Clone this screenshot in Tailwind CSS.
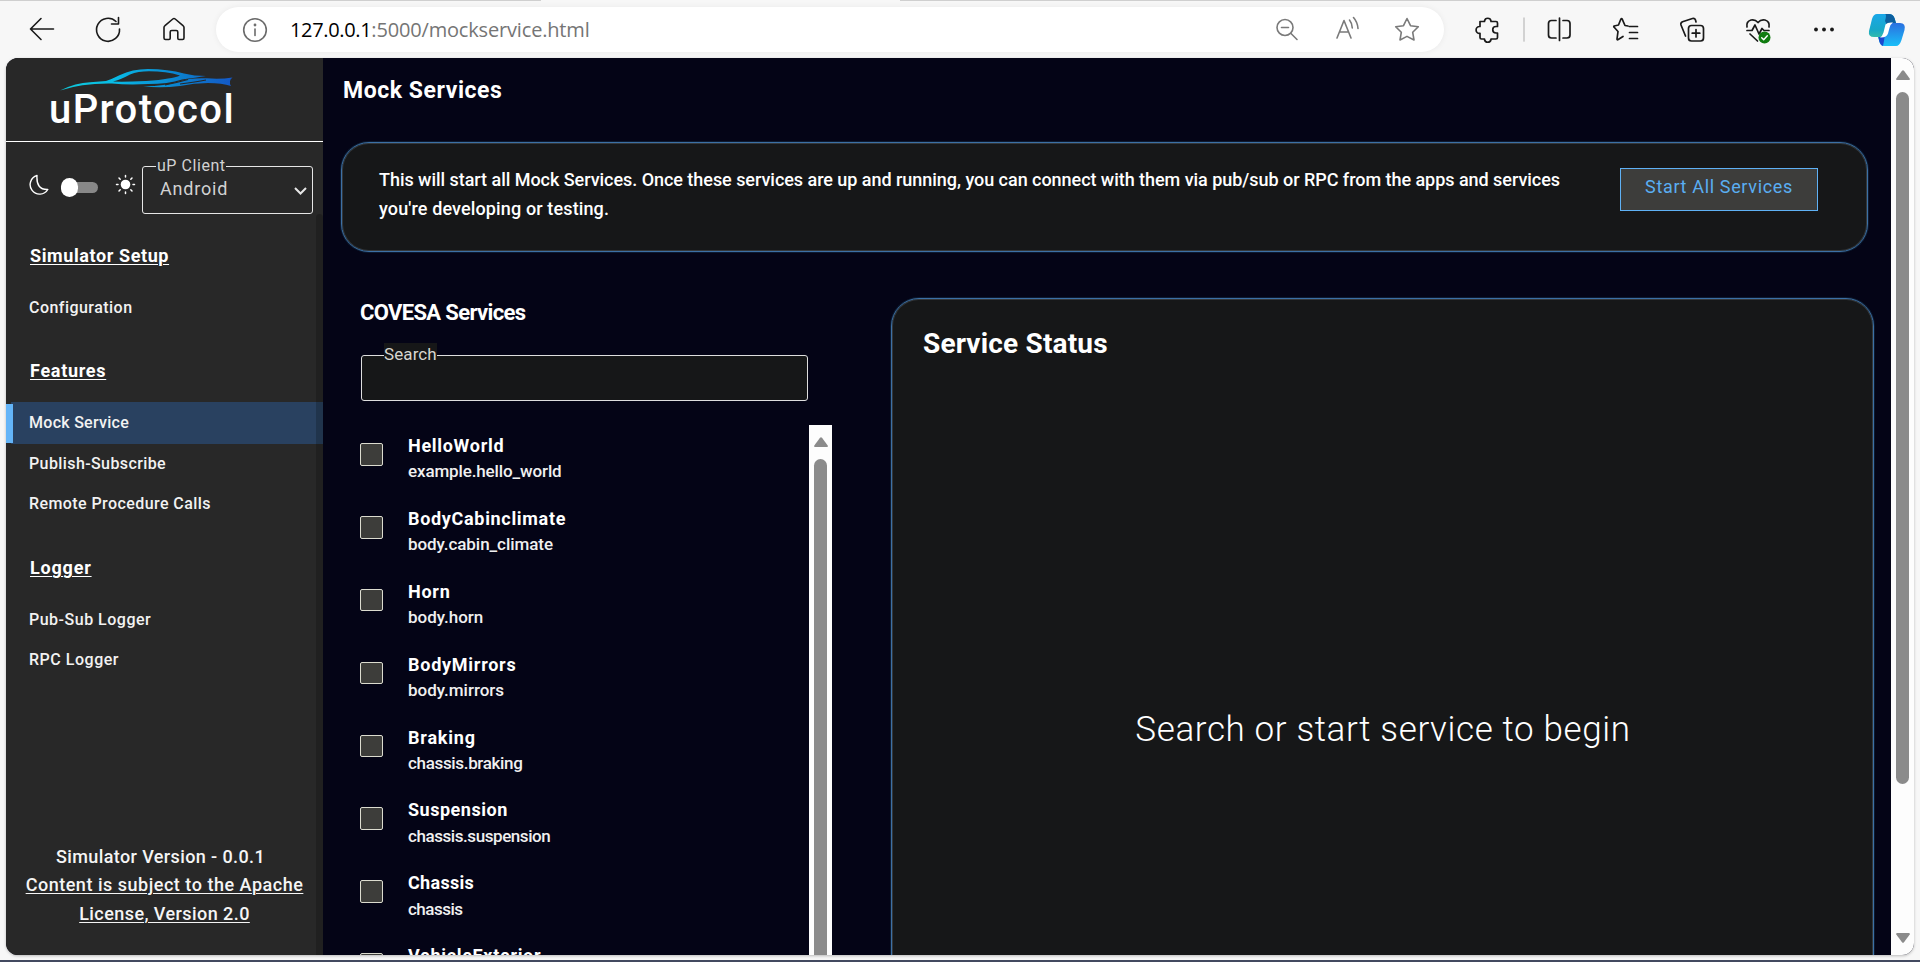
<!DOCTYPE html>
<html lang="en">
<head>
<meta charset="utf-8">
<title>Mock Services</title>
<script src="https://cdn.jsdelivr.net/npm/@tailwindcss/browser@4"></script>
</head>
<body class="w-[1920px] h-[962px] overflow-hidden bg-[#f7f7f7] font-[Roboto,sans-serif] text-white">
<div class="flex flex-col h-[962px]">
  <!-- browser toolbar -->
  <header class="flex h-[58px] shrink-0 relative text-black">
    <div class="absolute left-0 top-0 w-[541px] h-px bg-[#cfcfcf]"></div>
    <div class="absolute left-[900px] top-0 w-[1020px] h-px bg-[#cfcfcf]"></div>
    <svg class="w-[216px] h-[58px] shrink-0" viewBox="0 0 216 58" fill="none" stroke="#1a1a1a" stroke-width="1.6" stroke-linecap="round" stroke-linejoin="round">
      <path d="M53.500 29H30.500M41 18.500L30.500 29L41 39.500"/>
      <path d="M116 21.500A11.500 11.500 0 1 0 119.500 29M118.500 17.500V24H111.500"/>
      <path d="M164 27.500Q164 26.500 165 25.700L172.800 19Q174 18 175.200 19L183 25.700Q184 26.500 184 27.500V38Q184 39.500 182.500 39.500H179Q177.800 39.500 177.800 38.300V32Q177.800 30.500 176.300 30.500H171.700Q170.200 30.500 170.200 32V38.300Q170.200 39.500 169 39.500H165.500Q164 39.500 164 38Z"/>
    </svg>
    <div class="mt-[7px] h-[45px] w-[1228px] rounded-full bg-white shadow-[0_0_6px_rgba(0,0,0,0.06)] flex items-center pl-[26px] shrink-0">
      <svg class="size-[26px]" viewBox="0 0 26 26" fill="none" stroke="#6b6b6b" stroke-width="1.6" stroke-linecap="round"><circle cx="13" cy="13" r="11.300"/><path d="M13 12V18.500"/><circle cx="13" cy="8" r=".6" fill="#6b6b6b"/></svg>
      <div class="ml-[22px] w-[980px] text-[20px] leading-[28px] font-['Open_Sans',sans-serif] whitespace-nowrap"><span class="tracking-[-0.34px]">127.0.0.1</span><span class="tracking-[-0.17px] text-[#757575]">:5000/mockservice.html</span></div>
      <svg class="w-[160px] h-[45px] shrink-0" viewBox="1270 7 160 45" fill="none" stroke="#7a7a7a" stroke-width="1.6" stroke-linecap="round" stroke-linejoin="round">
        <circle cx="1285" cy="27.500" r="8"/><path d="M1291 33.500L1297 39.500M1281.500 27.500H1288.500"/>
        <path d="M1337 38L1344 20.500L1351 38M1339.500 32H1348.500M1349.500 20Q1352 23 1352.300 28M1353.500 17.500Q1357.500 22 1358 28.500"/>
        <path d="M1407 18.500L1410.500 25.700L1418.300 26.800L1412.700 32.300L1414 40L1407 36.400L1400 40L1401.300 32.300L1395.700 26.800L1403.500 25.700Z"/>
      </svg>
    </div>
    <svg class="w-[476px] h-[58px] shrink-0" viewBox="1444 0 476 58" fill="none" stroke="#1a1a1a" stroke-width="1.7" stroke-linecap="round" stroke-linejoin="round">
      <defs>
        <linearGradient id="ca" x1="0" y1="0" x2="0" y2="1"><stop offset="0" stop-color="#1aa7e8"/><stop offset=".5" stop-color="#18a8c8"/><stop offset="1" stop-color="#52d08a"/></linearGradient>
        <linearGradient id="cb" x1="0" y1="0" x2="0" y2="1"><stop offset="0" stop-color="#2b6fe0"/><stop offset="1" stop-color="#19bff8"/></linearGradient>
      </defs>
      <path d="M1480 21.500H1484.500V21A3.300 3.300 0 0 1 1491 21V21.500H1496Q1497.500 21.500 1497.500 23V26.500H1496A3 3 0 0 0 1496 33H1497.500V37.500Q1497.500 39 1496 39H1491V39.500A3.300 3.300 0 0 1 1484.500 39.500V39H1481.500Q1480 39 1480 37.500V33.300H1479.500A3.300 3.300 0 0 1 1479.500 26.500H1480Z"/>
      <path d="M1524 18V41" stroke="#cccccc"/>
      <path d="M1556 20.500H1551.500Q1548.500 20.500 1548.500 23.500V35Q1548.500 38 1551.500 38H1556M1563 20.500H1567Q1570 20.500 1570 23.500V35Q1570 38 1567 38H1563M1559.500 18V40.500"/>
      <path d="M1628 26L1625 25.500L1622.300 19.300Q1621.500 18 1620.800 19.300L1618.500 25L1614.200 26Q1613.300 26.500 1614.200 27.300L1618 31.500L1617 39Q1617 40.300 1618.200 39.500L1623 36.500M1629.500 26.500H1637.500M1629.500 32.500H1637.500M1629.500 38.500H1637.500"/>
      <rect x="1688.500" y="25.500" width="15" height="15.500" rx="3"/><path d="M1696 29.500V37M1692.200 33.200H1699.800M1685.500 36L1681 25Q1680.300 22.800 1682.500 21.800L1692.500 18.500Q1694.800 18 1695.500 20L1696 22"/>
      <path d="M1747 27Q1746 21.500 1751 20Q1755 19 1758 22.500Q1761 19 1765 20Q1770 21.500 1769 27M1747 30.500H1752L1755 25L1759 34L1762 28.500L1764 30.500H1769M1750 34L1757.500 41"/>
      <circle cx="1764.500" cy="37.500" r="6" fill="#107c10" stroke="none"/><path d="M1761.700 37.700L1763.700 39.700L1767.300 35.700" stroke="#fff" stroke-width="1.400"/>
      <g fill="#1a1a1a" stroke="none"><circle cx="1816" cy="29.500" r="1.900"/><circle cx="1824" cy="29.500" r="1.900"/><circle cx="1832" cy="29.500" r="1.900"/></g>
      <g stroke="none">
        <path d="M1877 14H1889Q1893 14 1894.500 18L1896 23H1890L1884 40L1882 45.500Q1880 44 1879 40L1878 37H1874Q1868 37 1869 31L1872 19Q1873.500 14 1877 14Z" fill="url(#ca)"/>
        <path d="M1885 14H1889Q1893 14 1894.500 18L1896 23H1892Q1889 23 1888 27L1885 21Q1887 14 1885 14Z" fill="#0d5f9e"/>
        <path d="M1892 23H1900Q1906 23 1904.500 30L1901.500 40Q1899.500 46 1896 46H1884Q1880 46 1879 40L1878.500 37H1881Q1884.500 37 1885.500 33L1887.500 26Q1889 23 1892 23Z" fill="url(#cb)"/>
        <path d="M1878.500 37H1881Q1883.500 37 1884.800 35Q1884 42 1883 46Q1880 45 1879 40Z" fill="#1b48cf"/>
        <path d="M1885.500 24.500Q1887.500 22 1893 22.500Q1890.500 24 1889.500 28L1888 33.500Q1886.500 38 1880 37.500Q1882.500 36 1883.500 32.500Z" fill="#fff"/>
      </g>
    </svg>
  </header>

  <div class="mx-[6px] h-[897px] flex rounded-xl overflow-hidden bg-[#040416] shadow-[0_1px_3px_rgba(0,0,0,0.25)] shrink-0 w-[1908px]">
    <!-- sidebar -->
    <aside class="w-[317px] shrink-0 bg-[#282828] flex flex-col relative">
      <div class="h-[84px] border-b border-white pt-[11px] pl-[44px] shrink-0">
        <svg class="ml-[10px] block w-[174px] h-[22px]" viewBox="60 69 174 22" fill="none">
          <defs><linearGradient id="car" gradientUnits="userSpaceOnUse" x1="60" y1="0" x2="233" y2="0"><stop offset="0" stop-color="#10c8d8"/><stop offset=".3" stop-color="#08bde6"/><stop offset=".75" stop-color="#0c78cc"/><stop offset="1" stop-color="#1458c8"/></linearGradient></defs>
          <path fill="url(#car)" fill-rule="evenodd" d="M60 90.500Q76 82.500 90 82.200L106 81Q112 79 120 75Q132 69 148 69Q168 69 184 73.500Q194 76 206 76Q196 77.500 182 79.500Q168 84 148 84Q128 85 112 83.500Q82 83 60 90.500ZM113 81.500Q124 82 146 81Q160 80 168 78.500Q176 77.500 180 75.500Q166 71.300 149 71.300Q138 71.300 130 74.500Q120 80 113 81.500Z"/>
          <path fill="url(#car)" d="M143 86.300Q164 86.500 179 81.500Q190 77.500 207 78.300Q220 79.500 232.500 77.500Q228 81 231 86Q222 83 208 83Q194 83 180 86Q160 88.500 143 86.300Z"/>
          <path stroke="#282828" stroke-width="1.200" d="M165 84.800Q178 82.500 188 79.500M180 84Q196 82 206 80"/>
        </svg>
        <div class="-mt-px -ml-px text-[40px] leading-[40px] font-medium tracking-[1.4px]">uProtocol</div>
      </div>
      <div class="mt-[17px] h-[56px] flex shrink-0">
        <svg class="ml-[23px] mt-[15px] size-[21px] shrink-0" viewBox="29 174 21 21" fill="none" stroke="#fff" stroke-width="1.400" stroke-linejoin="round"><path d="M37 175.500A9.500 9.500 0 1 0 47.800 189.500Q36 190 37 175.500Z"/></svg>
        <div class="ml-[11px] mt-[19px] w-[37px] h-[19px] flex items-center shrink-0"><div class="w-full h-[11px] rounded-full bg-[#888] flex items-center"><div class="w-[17px] h-[19px] rounded-full bg-white"></div></div></div>
        <svg class="ml-[17px] mt-[15px] size-[21px] shrink-0" viewBox="115 174 21 21" stroke="#fff" stroke-width="1.500" stroke-linecap="round"><circle cx="125.500" cy="184.500" r="4.800" fill="#fff" stroke="none"/><path d="M125.500 175.500V177M125.500 192V193.500M116.500 184.500H118M133 184.500H134.500M119 178L120.200 179.200M130.800 189.800L132 191M119 191L120.200 189.800M130.800 179.200L132 178"/></svg>
        <div class="ml-[6px] mt-[7px] w-[171px] h-[48px] shrink-0 border border-[#e6e6e6] rounded-[3px] relative flex justify-between pl-[17px] pr-[5px]">
          <div class="absolute -top-[12px] left-[13px] bg-[#282828] pl-px text-[16px] leading-[22px] tracking-[0.55px] text-[#d2d2d2] whitespace-nowrap">uP Client</div>
          <div class="mt-[10px] text-[18px] leading-[24px] tracking-[0.8px] text-[#d2d2d2]">Android</div>
          <svg class="mt-[19px] w-[13px] h-[10px]" viewBox="0 0 13 10" fill="none" stroke="#e6e6e6" stroke-width="2"><path d="M1 2L6.500 7.500L12 2"/></svg>
        </div>
      </div>
      <nav class="flex flex-col text-[16px] font-medium">
        <div class="mt-[27px] ml-[24px] text-[18px] leading-[28px] font-bold underline tracking-[0.6px] underline-offset-2 decoration-1 self-start">Simulator Setup</div>
        <div class="mt-[18px] h-[39px] pl-[23px] leading-[40px] tracking-[0.46px] text-[#f2f2f2]">Configuration</div>
        <div class="mt-[30px] ml-[24px] text-[18px] leading-[28px] font-bold underline tracking-[0.7px] underline-offset-2 decoration-1">Features</div>
        <div class="mt-[17px] ml-[5px] h-[42px] bg-[#294160] flex items-center pl-[18px] tracking-[0.28px] relative text-[#f2f2f2]"><div class="absolute -left-[5px] top-[2px] w-[7px] h-[39px] bg-[#63b4f8]"></div>Mock Service</div>
        <div class="pl-[23px] leading-[40px] tracking-[0.4px] text-[#f2f2f2]">Publish-Subscribe</div>
        <div class="pl-[23px] leading-[40px] tracking-[0.42px] text-[#f2f2f2]">Remote Procedure Calls</div>
        <div class="mt-[30px] ml-[24px] text-[18px] leading-[28px] font-bold underline tracking-[0.8px] underline-offset-2 decoration-1">Logger</div>
        <div class="mt-[18px] pl-[23px] leading-[40px] tracking-[0.5px] text-[#f2f2f2]">Pub-Sub Logger</div>
        <div class="pl-[23px] leading-[40px] tracking-[0.52px] text-[#f2f2f2]">RPC Logger</div>
      </nav>
      <div class="absolute right-0 top-[156px] bottom-0 w-[7px] bg-black/20 rounded-t"></div>
      <div class="mt-auto mb-[27px] text-center text-[18px] leading-[28.500px] font-medium whitespace-nowrap text-[#f5f5f5]">
        <div class="pr-[8px] tracking-[0.39px]">Simulator Version - 0.0.1</div>
        <div class="tracking-[0.52px] underline underline-offset-2 decoration-1">Content is subject to the Apache</div>
        <div class="tracking-[0.43px] underline underline-offset-2 decoration-1">License, Version 2.0</div>
      </div>
    </aside>

    <!-- content -->
    <main class="w-[1568px] shrink-0 pl-[18px] flex flex-col">
      <h1 class="mt-[17px] ml-[2px] text-[23px] leading-[32px] font-bold tracking-[0.55px]">Mock Services</h1>
      <section class="mt-[35px] w-[1527px] h-[110px] rounded-[28px] border border-[#3c70a5] bg-[#161718] shadow-[inset_0_0_0_1px_#34383b,0_0_0_1px_#0c1a30] flex pl-[37px] shrink-0">
        <p class="mt-[23px] w-[1241px] text-[18px] leading-[28.800px] font-medium whitespace-nowrap"><span class="tracking-[-0.04px]">This will start all Mock Services. Once these services are up and running, you can connect with them via pub/sub or RPC from the apps and services</span><br><span class="tracking-[0.13px]">you're developing or testing.</span></p>
        <button class="mt-[25px] w-[198px] h-[43px] bg-[#3d3d3b] border border-[#5fb1f5] text-[#5aaef2] text-[18px] leading-[28px] tracking-[0.65px] pb-[6px] shrink-0">Start All Services</button>
      </section>
      <div class="mt-[46px] flex h-[657px]">
        <section class="w-[491px] pl-[19px] flex flex-col shrink-0">
          <h2 class="mt-px text-[22px] leading-[28px] font-bold tracking-[-0.65px]">COVESA Services</h2>
          <div class="mt-[28px] ml-[1px] w-[447px] h-[46px] shrink-0 border border-[#dedede] rounded-[3px] bg-[#161718] relative">
            <div class="absolute left-[22px] -top-[13px] h-[20px] bg-[#161718] text-[17px] leading-[23px] tracking-[0.1px] text-[#d6d6d0]">Search</div>
          </div>
          <div class="mt-[24px] h-[530px] flex overflow-hidden">
            <ul class="w-[449px] pt-[7px] flex flex-col shrink-0">
              <li class="h-[73px] shrink-0 flex"><span class="mt-[11px] size-[23px] rounded-[2px] border border-[#dcdccf] bg-[#3d3d3a]"></span><div class="ml-[25px] whitespace-nowrap"><div class="text-[18px] leading-[28px] font-bold tracking-[0.7px]">HelloWorld</div><div class="-mt-px text-[17px] leading-[24px] font-medium text-[#f0f0f0] tracking-[-0.13px]">example.hello_world</div></div></li>
              <li class="h-[73px] shrink-0 flex"><span class="mt-[11px] size-[23px] rounded-[2px] border border-[#dcdccf] bg-[#3d3d3a]"></span><div class="ml-[25px] whitespace-nowrap"><div class="text-[18px] leading-[28px] font-bold tracking-[0.68px]">BodyCabinclimate</div><div class="-mt-px text-[17px] leading-[24px] font-medium text-[#f0f0f0] tracking-[-0.06px]">body.cabin_climate</div></div></li>
              <li class="h-[73px] shrink-0 flex"><span class="mt-[11px] w-[23px] h-[22px] rounded-[2px] border border-[#dcdccf] bg-[#3d3d3a]"></span><div class="ml-[25px] whitespace-nowrap"><div class="text-[18px] leading-[28px] font-bold tracking-[0.75px]">Horn</div><div class="-mt-px text-[17px] leading-[24px] font-medium text-[#f0f0f0]">body.horn</div></div></li>
              <li class="h-[73px] shrink-0 flex"><span class="mt-[11px] w-[23px] h-[22px] rounded-[2px] border border-[#dcdccf] bg-[#3d3d3a]"></span><div class="ml-[25px] whitespace-nowrap"><div class="text-[18px] leading-[28px] font-bold tracking-[0.74px]">BodyMirrors</div><div class="-mt-px text-[17px] leading-[24px] font-medium text-[#f0f0f0]">body.mirrors</div></div></li>
              <li class="h-[72px] shrink-0 flex"><span class="mt-[11px] w-[23px] h-[22px] rounded-[2px] border border-[#dcdccf] bg-[#3d3d3a]"></span><div class="ml-[25px] whitespace-nowrap"><div class="text-[18px] leading-[28px] font-bold tracking-[0.8px]">Braking</div><div class="-mt-px text-[17px] leading-[24px] font-medium text-[#f0f0f0] tracking-[-0.33px]">chassis.braking</div></div></li>
              <li class="h-[73px] shrink-0 flex"><span class="mt-[11px] size-[23px] rounded-[2px] border border-[#dcdccf] bg-[#3d3d3a]"></span><div class="ml-[25px] whitespace-nowrap"><div class="text-[18px] leading-[28px] font-bold tracking-[0.52px]">Suspension</div><div class="text-[17px] leading-[24px] font-medium text-[#f0f0f0] tracking-[-0.43px]">chassis.suspension</div></div></li>
              <li class="h-[73px] shrink-0 flex"><span class="mt-[11px] size-[23px] rounded-[2px] border border-[#dcdccf] bg-[#3d3d3a]"></span><div class="ml-[25px] whitespace-nowrap"><div class="text-[18px] leading-[28px] font-bold tracking-[0.3px]">Chassis</div><div class="text-[17px] leading-[24px] font-medium text-[#f0f0f0] tracking-[-0.5px]">chassis</div></div></li>
              <li class="h-[73px] shrink-0 flex"><span class="mt-[11px] size-[23px] rounded-[2px] border border-[#dcdccf] bg-[#3d3d3a]"></span><div class="ml-[25px] whitespace-nowrap"><div class="text-[18px] leading-[28px] font-bold tracking-[0.68px]">VehicleExterior</div></div></li>
            </ul>
            <div class="w-[23px] h-[530px] bg-[#fdfdfd] flex flex-col items-center shrink-0">
              <svg class="mt-[12px] w-[14px] h-[10px] shrink-0" viewBox="0 0 14 10"><path fill="#8b8b8b" d="M6 .8Q7 -.3 8 .8L13.700 8.500Q14.200 10 12.700 10H1.300Q-.2 10 .3 8.500Z"/></svg>
              <div class="mt-[12px] w-[13px] h-[520px] shrink-0 rounded-full bg-[#8b8b8b]"></div>
            </div>
          </div>
        </section>
        <section class="ml-[59px] w-[983px] h-[700px] shrink-0 rounded-t-[28px] border border-[#3c70a5] bg-[#161718] shadow-[inset_0_0_0_1px_#34383b,0_0_0_1px_#0c1a30]">
          <h2 class="mt-[25px] ml-[31px] text-[28px] leading-[40px] font-bold tracking-[0.17px]">Service Status</h2>
          <div class="mt-[341px] pl-[1px] text-center text-[35px] leading-[50px] font-light tracking-[0.62px]">Search or start service to begin</div>
        </section>
      </div>
    </main>

    <!-- page scrollbar -->
    <div class="w-[23px] shrink-0 bg-[#fdfdfd] flex flex-col items-center">
      <svg class="mt-[12px] w-[14px] h-[10px] shrink-0" viewBox="0 0 14 10"><path fill="#8b8b8b" d="M6 .8Q7 -.3 8 .8L13.700 8.500Q14.200 10 12.700 10H1.300Q-.2 10 .3 8.500Z"/></svg>
      <div class="mt-[12px] w-[13px] h-[692px] shrink-0 rounded-full bg-[#8b8b8b]"></div>
      <svg class="mt-auto mb-[12px] w-[14px] h-[10px] shrink-0" viewBox="0 0 14 10"><path fill="#8b8b8b" d="M6 9.200Q7 10.300 8 9.200L13.700 1.500Q14.200 0 12.700 0H1.300Q-.2 0 .3 1.500Z"/></svg>
    </div>
  </div>
  <div class="mt-[5px] h-[2px] bg-[#434a60] shrink-0"></div>
</div>
</body>
</html>
